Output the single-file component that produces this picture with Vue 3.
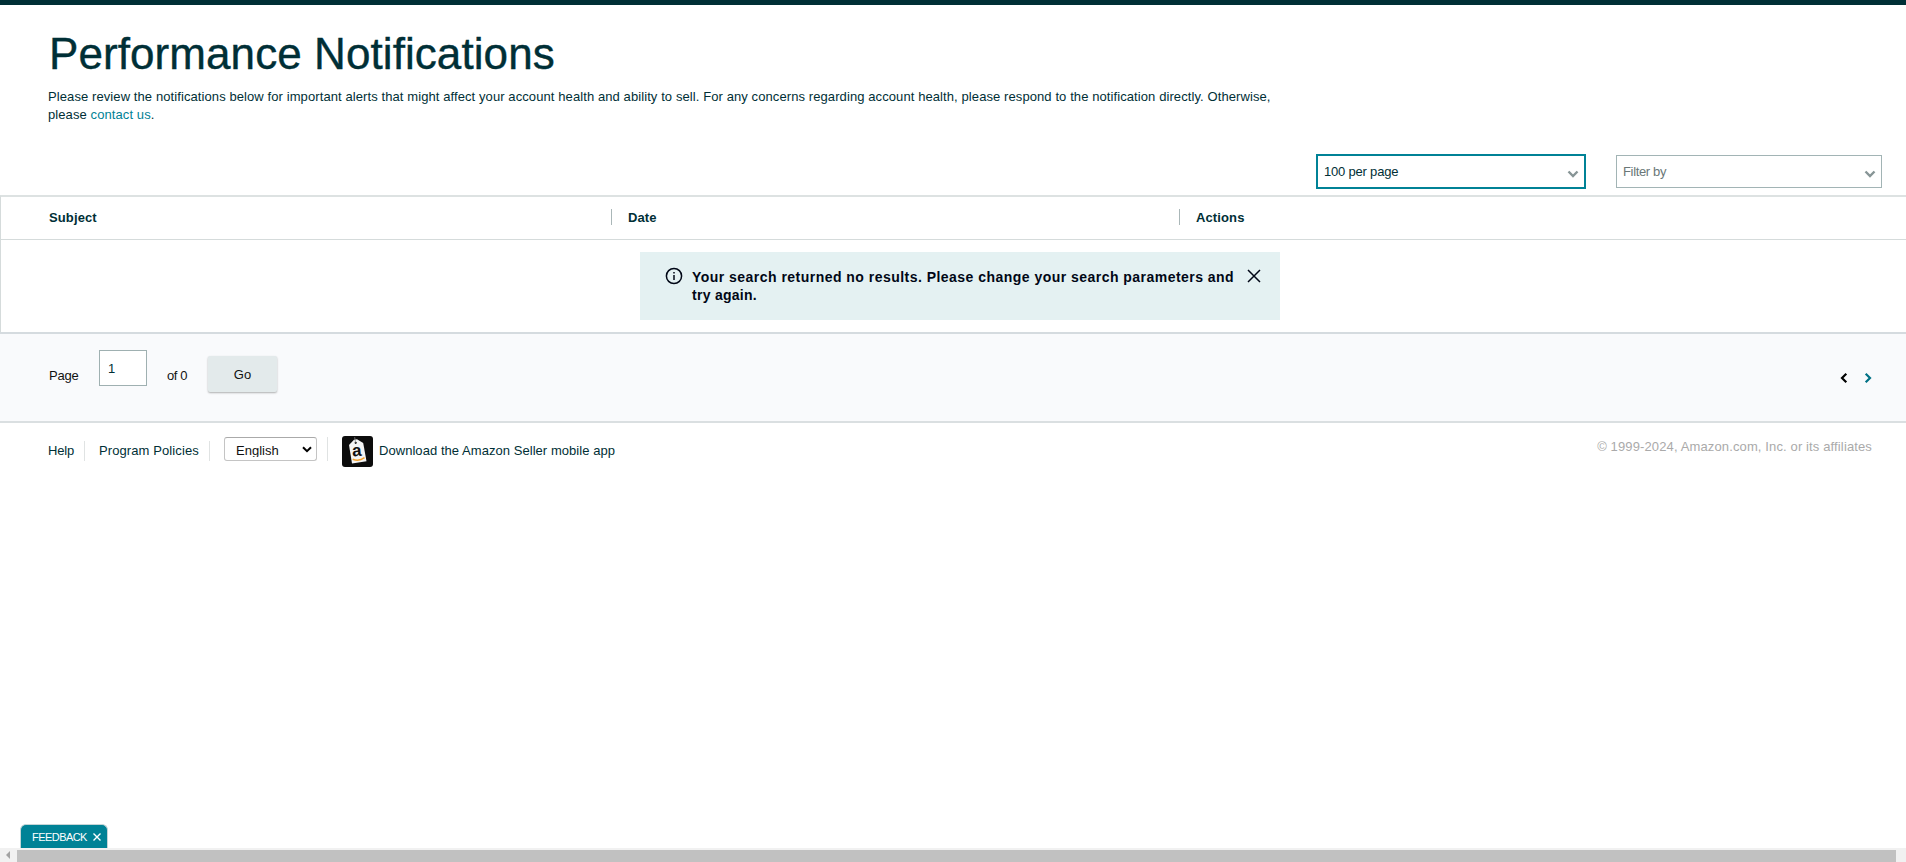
<script setup>
import { ref } from 'vue';

const page = ref('1');
const language = ref('English');
const columns = ['Subject', 'Date', 'Actions'];
</script>

<template>
    <div class="page">
        <header class="intro">
            <h1 class="title">Performance Notifications</h1>
            <p class="description">
                Please review the notifications below for important alerts that might affect your account health and ability to sell. For any concerns regarding account health, please respond to the notification directly. Otherwise,
                <br>please <a href="#">contact us</a>.
            </p>
        </header>

        <div class="filters">
            <div class="dropdown active">
                <span>100 per page</span>
                <svg width="12" height="8" viewBox="0 0 12 8"><path d="M1.5 1.5L6 6l4.5-4.5" /></svg>
            </div>
            <div class="dropdown">
                <span>Filter by</span>
                <svg width="12" height="8" viewBox="0 0 12 8"><path d="M1.5 1.5L6 6l4.5-4.5" /></svg>
            </div>
        </div>

        <section class="table">
            <div class="table-head">
                <div v-for="column in columns" :key="column" class="cell">{{ column }}</div>
            </div>
            <div class="table-body">
                <div class="alert">
                    <svg class="info" width="18" height="18" viewBox="0 0 18 18">
                        <circle cx="9" cy="9" r="7.6" />
                        <path d="M9 8v5M9 5v1.6" />
                    </svg>
                    <p class="alert-text">Your search returned no results. Please change your search parameters and<br><span>try again.</span></p>
                    <svg class="close" width="14" height="14" viewBox="0 0 14 14"><path d="M1 1l12 12M13 1L1 13" /></svg>
                </div>
            </div>
        </section>

        <section class="pager">
            <span class="page-label">Page</span>
            <input v-model="page" class="page-input" type="text">
            <span class="page-total">of 0</span>
            <button class="go">Go</button>
            <div class="arrows">
                <svg width="8" height="12" viewBox="0 0 8 12"><path d="M6.3 1.7L2 6l4.3 4.3" /></svg>
                <svg class="next" width="8" height="12" viewBox="0 0 8 12"><path d="M1.7 1.7L6 6l-4.3 4.3" /></svg>
            </div>
        </section>

        <footer class="footer">
            <a class="help" href="#">Help</a>
            <a class="policies" href="#">Program Policies</a>
            <div class="language">
                <div class="language-select">
                    <span>{{ language }}</span>
                    <svg width="10" height="7" viewBox="0 0 10 7"><path d="M1 1.2l4 4 4-4" /></svg>
                </div>
            </div>
            <a class="download" href="#">
                <svg width="31" height="31" viewBox="0 0 31 31">
                    <rect width="31" height="31" rx="3" fill="#0c0c0c" />
                    <path d="M7 9l5-5.2 3-.5 6.2 3.7 3.3 18.2L10 27.5z" fill="#f4f4f4" />
                    <circle cx="13.7" cy="6.8" r="1.1" fill="#111" />
                    <path d="M13.5 6.5L12.7 1.2" stroke="#888" stroke-width=".8" fill="none" />
                    <text x="10.2" y="20.2" transform="rotate(-5 15 16)" font-family="Liberation Sans" font-weight="bold" font-size="17" fill="#111">a</text>
                    <path d="M10.7 23.2q6.3 2.6 11.8-1.5" stroke="#f5a12c" stroke-width="1.5" fill="none" />
                </svg>
                <span>Download the Amazon Seller mobile app</span>
            </a>
            <span class="copyright">© 1999-2024, Amazon.com, Inc. or its affiliates</span>
        </footer>

        <div class="feedback">
            <span>FEEDBACK</span>
            <svg width="8" height="8" viewBox="0 0 8 8"><path d="M.5.5l7 7M7.5.5l-7 7" /></svg>
        </div>
        <div class="scrollbar">
            <svg width="17" height="14" viewBox="0 0 17 14"><path d="M10 3v8L6 7z" /></svg>
            <div class="thumb"></div>
        </div>
    </div>
</template>

<style>
body {
    margin: 0;
    overflow: hidden;
}
</style>

<style scoped>
* {
    box-sizing: border-box;
}

.page {
    position: relative;
    display: flex;
    flex-direction: column;
    height: 862px;
    border-top: 5px solid #002f36;
    background: #fff;
    color: #002f36;
    font-family: 'Liberation Sans', Arial, sans-serif;
    font-size: 13px;
    white-space: nowrap;
}

a {
    color: #002f36;
    text-decoration: none;
}

svg {
    display: block;
    flex: none;
}

.intro {
    height: 149px;
    padding: 23px 48px 0;
}

.title {
    margin: 0;
    padding-left: 1px;
    font-size: 44px;
    line-height: 52px;
    font-weight: normal;
    letter-spacing: 0.08px;
    -webkit-text-stroke: 0.4px #002f36;
}

.description {
    margin: 8px 0 0;
    line-height: 18px;
    letter-spacing: 0.092px;
}

.description a {
    color: #008296;
}

.filters {
    display: flex;
    justify-content: flex-end;
    align-items: center;
    gap: 30px;
    height: 35px;
    padding-right: 24px;
}

.dropdown {
    display: flex;
    align-items: center;
    justify-content: space-between;
    width: 266px;
    height: 33px;
    padding: 0 5px 0 6px;
    border: 1px solid #a2b4b5;
    color: #6a7778;
    letter-spacing: -0.35px;
}

.dropdown.active {
    width: 270px;
    height: 35px;
    border: 2px solid #008296;
    color: #002f36;
    letter-spacing: -0.2px;
}

.dropdown svg {
    margin-top: 4px;
}

.dropdown path {
    fill: none;
    stroke: #879596;
    stroke-width: 2.4;
}

.table {
    height: 137px;
    margin-top: 6px;
    border: 1px solid #d5dbdb;
    border-top: 2px solid #dde2e2;
    border-right: 0;
    border-bottom: 0;
}

.table-head {
    display: flex;
    height: 43px;
    padding: 12px 0 0 33px;
    border-bottom: 1px solid #d5dbdb;
    font-weight: bold;
    letter-spacing: 0.12px;
}

.cell {
    width: 568px;
    height: 16px;
    padding-left: 16px;
    line-height: 18px;
}

.cell:first-child {
    width: 577px;
    padding-left: 15px;
}

.cell + .cell {
    border-left: 1px solid #aab7b8;
}

.table-body {
    padding: 12px 0 0 639px;
}

.alert {
    display: flex;
    width: 640px;
    height: 68px;
    padding: 16px 19px 0 25px;
    background: #e4f1f2;
    color: #000716;
}

.info {
    margin-top: -1px;
    fill: none;
    stroke: #000716;
    stroke-width: 1.5;
}

.alert-text {
    flex: 1;
    margin: 0 0 0 9px;
    font-size: 14px;
    font-weight: bold;
    line-height: 18px;
    letter-spacing: 0.47px;
}

.alert-text span {
    letter-spacing: 0.28px;
}

.close {
    margin-top: 1px;
    stroke: #000716;
    stroke-width: 1.5;
}

.pager {
    display: flex;
    height: 91px;
    padding: 18px 34px 0 49px;
    border-top: 2px solid #d5dbdf;
    border-bottom: 2px solid #dadfe1;
    background: #f9fafc;
    color: #111;
}

.page-label {
    width: 50px;
    margin-top: 16px;
    letter-spacing: -0.2px;
}

.page-input {
    width: 48px;
    height: 36px;
    margin-top: -2px;
    padding: 0 0 0 8px;
    border: 1px solid #9fb0b1;
    background: #fff;
    color: #002f36;
    font: inherit;
    outline: none;
}

.page-total {
    width: 40px;
    margin: 16px 0 0 20px;
    letter-spacing: -0.4px;
}

.go {
    width: 69px;
    height: 36px;
    margin: 4px 0 0 1px;
    padding: 0;
    border: 0;
    border-radius: 2px;
    background: #e3eaeb;
    box-shadow: 0 1px 2px rgba(0, 0, 0, 0.3);
    color: #111;
    font: inherit;
}

.arrows {
    display: flex;
    gap: 16px;
    margin: 20px 0 0 auto;
}

.arrows path {
    fill: none;
    stroke: #000;
    stroke-width: 2.2;
}

.arrows .next path {
    stroke: #007185;
}

.footer {
    display: flex;
    align-items: flex-start;
    padding: 14px 34px 0 48px;
}

.help,
.policies {
    height: 20px;
    margin-top: 4px;
    padding-top: 2px;
    border-right: 1px solid #e0e3e3;
}

.help {
    width: 37px;
    letter-spacing: -0.15px;
}

.policies {
    width: 125px;
    padding-left: 14px;
    letter-spacing: 0.1px;
}

.language {
    height: 24px;
    width: 118px;
    padding-left: 14px;
    border-right: 1px solid #e0e3e3;
}

.language-select {
    display: flex;
    justify-content: space-between;
    width: 93px;
    height: 24px;
    padding: 5px 4px 0 11px;
    border: 1px solid #c4c4c4;
    border-top-color: #aaa;
    border-radius: 3px;
    color: #111;
}

.language-select span {
    height: 14px;
    overflow: hidden;
}

.language-select svg {
    margin-top: 3px;
}

.language-select path {
    fill: none;
    stroke: #000;
    stroke-width: 2;
}

.download {
    display: flex;
    align-items: center;
    gap: 6px;
    margin: -1px 0 0 14px;
    letter-spacing: 0.05px;
}

.download span {
    margin-top: -2px;
}

.copyright {
    margin: 2px 0 0 auto;
    color: #aaa;
    letter-spacing: 0.13px;
}

.feedback {
    position: absolute;
    left: 20px;
    bottom: 14px;
    display: flex;
    align-items: center;
    gap: 6px;
    width: 88px;
    height: 24px;
    padding-left: 11px;
    border: 1px solid #c5d4d6;
    border-bottom: 0;
    border-radius: 6px 6px 0 0;
    background: #008296;
    color: #fff;
    font-size: 11px;
    letter-spacing: -0.55px;
}

.feedback path {
    stroke: #fff;
    stroke-width: 1.4;
}

.scrollbar {
    display: flex;
    height: 14px;
    margin-top: auto;
    padding-right: 10px;
    background: #f1f1f1;
}

.scrollbar path {
    fill: #a3a3a3;
}

.thumb {
    flex: 1;
    margin-top: 2px;
    background: #c1c1c1;
}
</style>
